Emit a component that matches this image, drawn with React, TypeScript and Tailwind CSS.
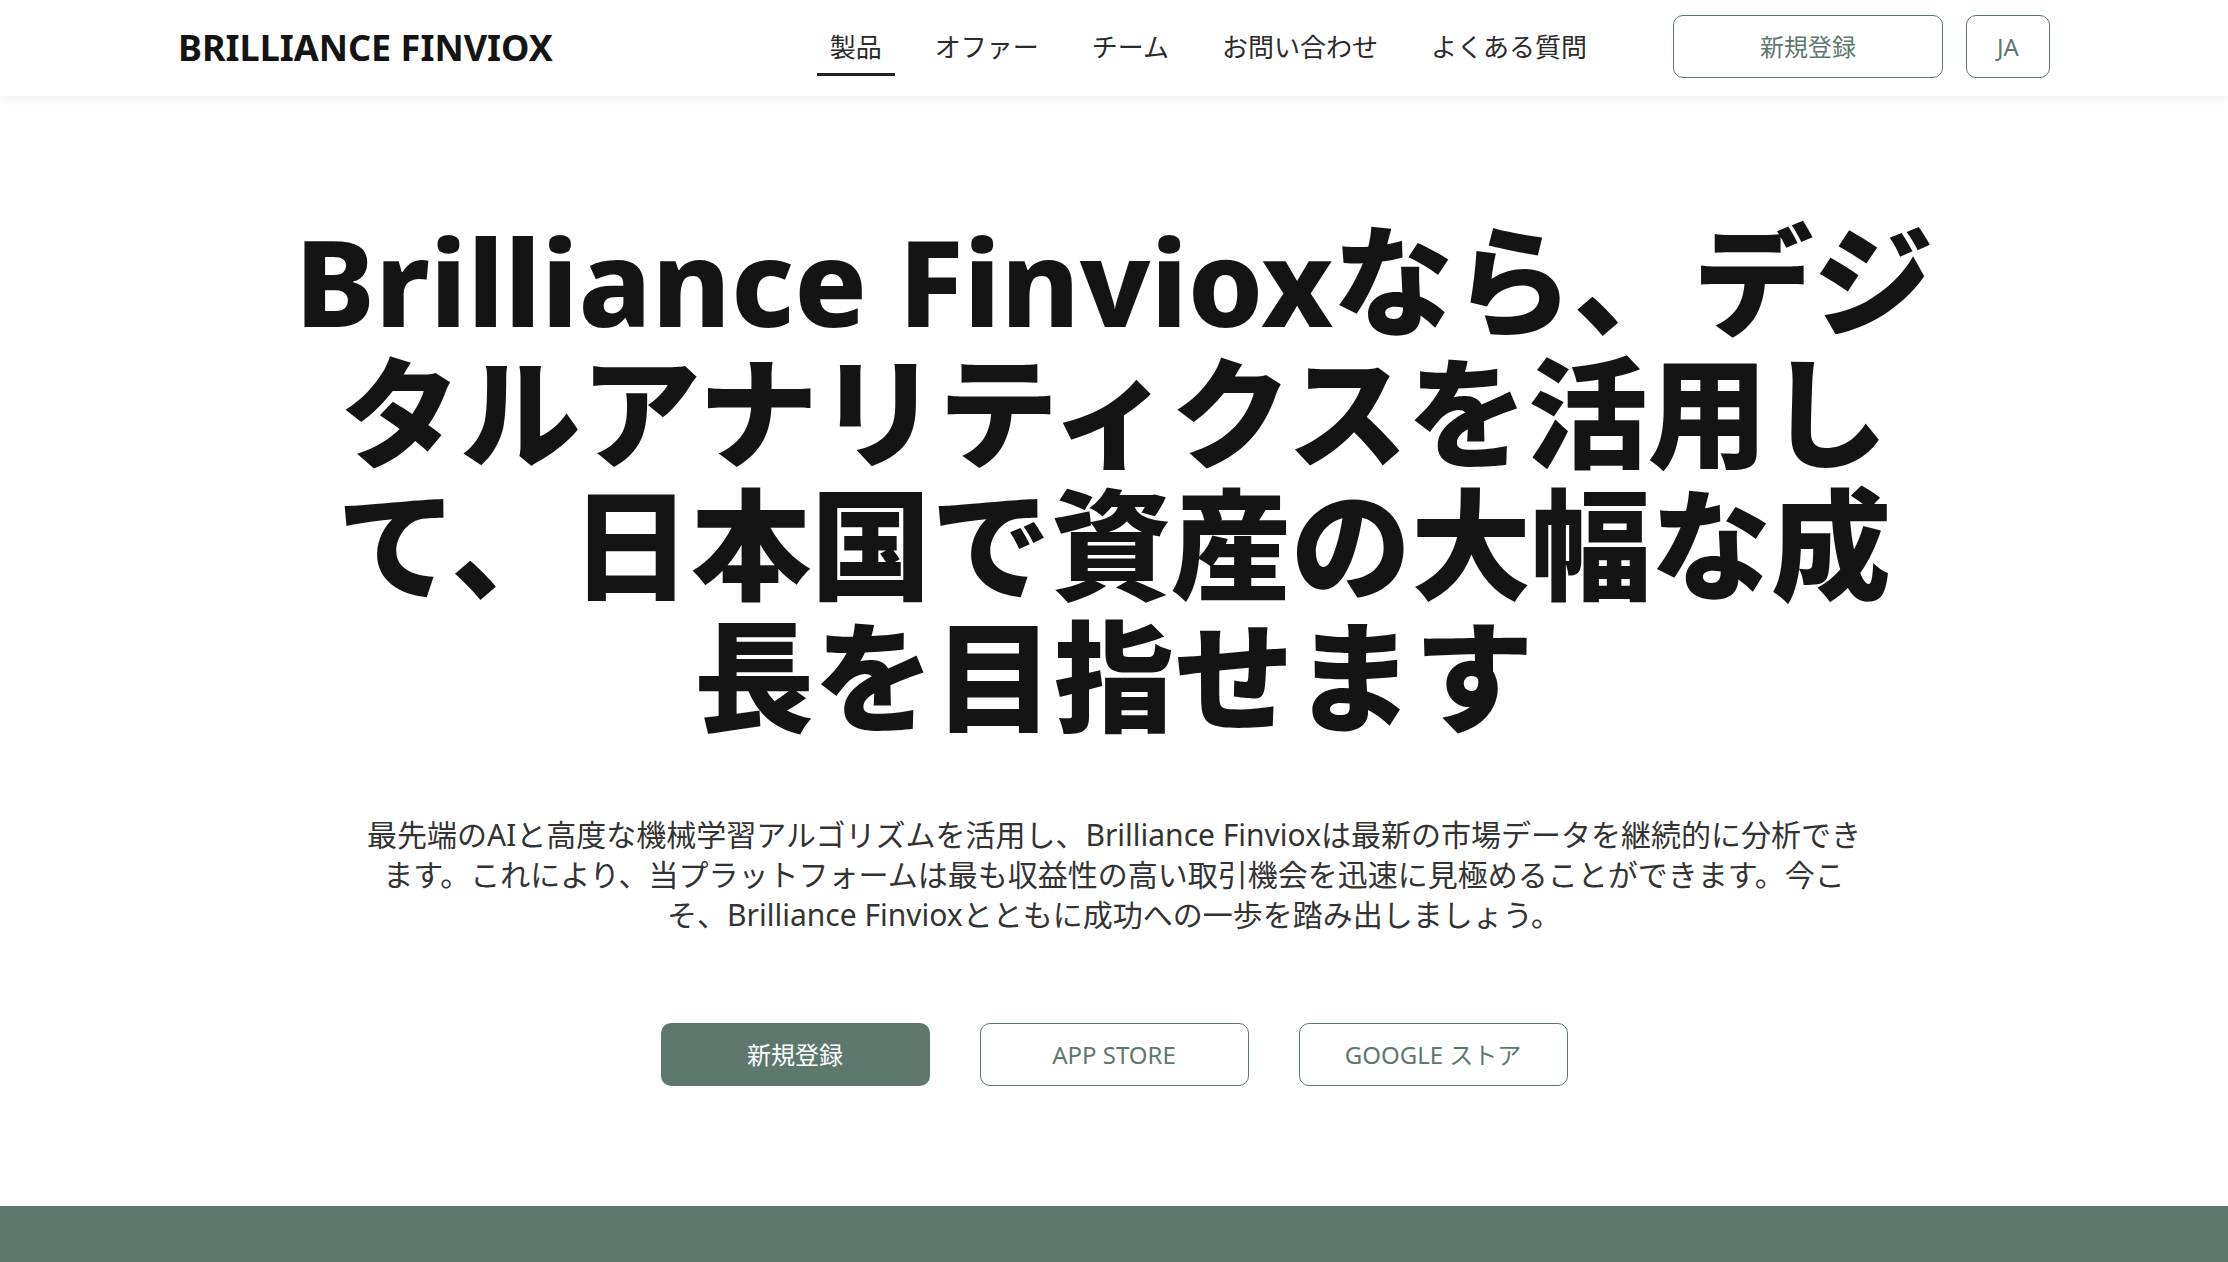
import React from 'react';

const navItems = ['製品', 'オファー', 'チーム', 'お問い合わせ', 'よくある質問'];

function Header() {
    return (
        <header className="bg-white shadow-[0_2px_10px_rgba(0,0,0,0.07)] relative z-10">
            <div className="max-w-[1872px] mx-auto h-[96px] flex items-center justify-between">
                <div className="text-[36px] font-bold text-[#141414]">BRILLIANCE FINVIOX</div>
                <div className="flex items-center">
                    <nav className="flex items-center gap-[27px]">
                        {navItems.map((item, i) => (
                            <a
                                key={item}
                                href="#"
                                className={
                                    i === 0
                                        ? 'px-[13px] pt-[10px] pb-[10px] text-[26px] leading-[32px] text-[#2b2b2b] border-b-[3px] border-[#222]'
                                        : 'px-[13px] pt-[10px] pb-[10px] text-[26px] leading-[32px] text-[#2b2b2b] border-b-[3px] border-transparent'
                                }
                            >
                                {item}
                            </a>
                        ))}
                    </nav>
                    <div className="flex items-center gap-[23px] ml-[73px] -mt-[3px]">
                        <button className="w-[270px] h-[63px] border border-[#5e786e] rounded-[10px] text-[24px] text-[#5e786e]">
                            新規登録
                        </button>
                        <button className="w-[84px] h-[63px] border border-[#5e786e] rounded-[10px] text-[24px] text-[#5e786e]">
                            JA
                        </button>
                    </div>
                </div>
            </div>
        </header>
    );
}

function Hero() {
    return (
        <section className="bg-white pt-[119px] pb-[120px] flex flex-col items-center text-center">
            <h1 className="max-w-[1664px] text-[120px] leading-[132px] font-extrabold text-[#141414]">
                Brilliance Finvioxなら、デジタルアナリティクスを活用して、日本国で資産の大幅な成長を目指せます
            </h1>
            <p className="mt-[72px] max-w-[1510px] text-[30px] leading-[40px] text-[#333]">
                最先端のAIと高度な機械学習アルゴリズムを活用し、Brilliance Finvioxは最新の市場データを継続的に分析できます。これにより、当プラットフォームは最も収益性の高い取引機会を迅速に見極めることができます。今こそ、Brilliance Finvioxとともに成功への一歩を踏み出しましょう。
            </p>
            <div className="mt-[88px] flex items-center gap-[50px]">
                <button className="w-[269px] h-[63px] rounded-[10px] bg-[#5e786e] text-white text-[24px]">新規登録</button>
                <button className="w-[269px] h-[63px] rounded-[10px] border border-[#5e786e] text-[#5e786e] text-[24px]">APP STORE</button>
                <button className="w-[269px] h-[63px] rounded-[10px] border border-[#5e786e] text-[#5e786e] text-[24px]">GOOGLE ストア</button>
            </div>
        </section>
    );
}

export default function App() {
    return (
        <div className="min-h-screen bg-white font-['Noto_Sans','Noto_Sans_CJK_JP',sans-serif]">
            <Header />
            <Hero />
            <section className="bg-[#5e786e] h-[400px]"></section>
        </div>
    );
}
